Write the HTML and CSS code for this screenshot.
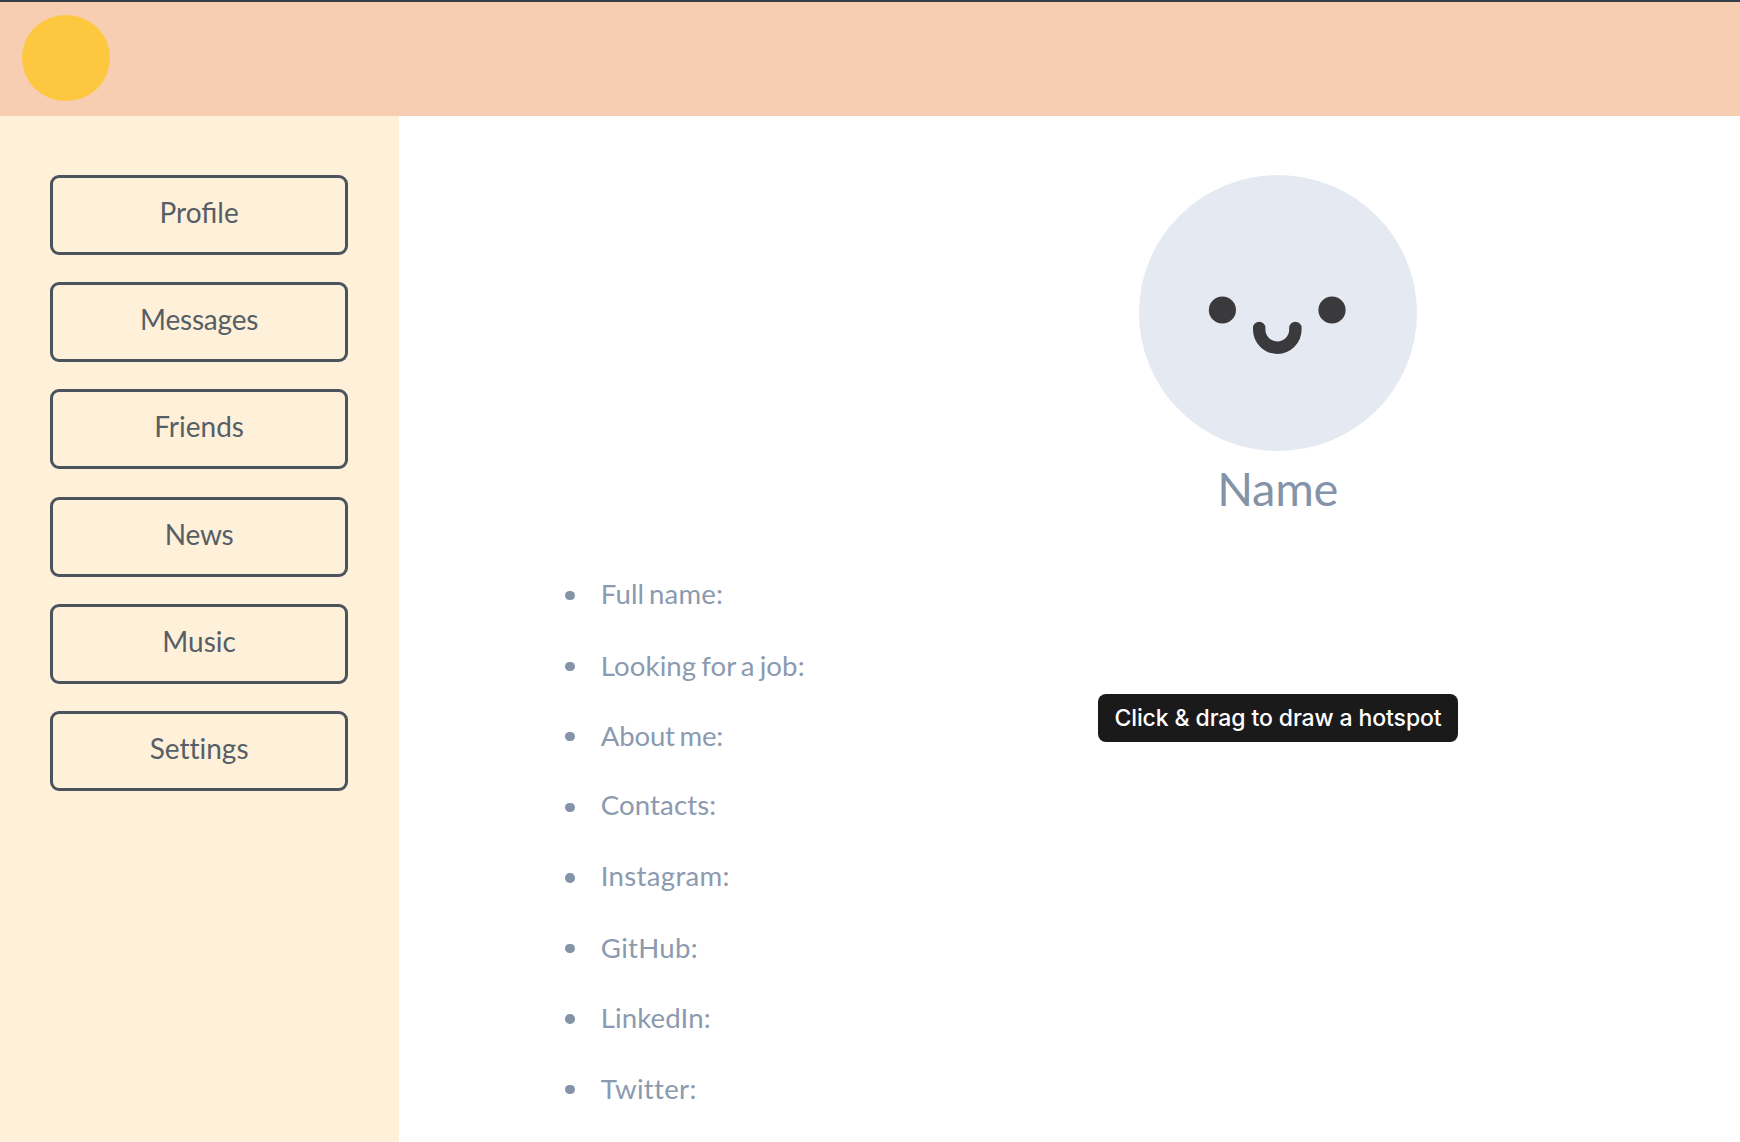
FILE: index.html
```html
<!DOCTYPE html>
<html lang="en">
<head>
<meta charset="utf-8">
<title>Profile</title>
<link rel="stylesheet" href="styles.css">
</head>
<body>
<header class="topbar"><div class="logo"></div></header>
<div class="layout">
  <nav class="sidebar">
    <a class="nav-button">Profile</a>
    <a class="nav-button snug">Messages</a>
    <a class="nav-button">Friends</a>
    <a class="nav-button snug">News</a>
    <a class="nav-button">Music</a>
    <a class="nav-button plain">Settings</a>
  </nav>
  <main class="content">
    <svg class="avatar" viewBox="0 0 278 276" width="278" height="276">
      <ellipse cx="139" cy="138" rx="139" ry="138" fill="#e4e9f2"/>
      <circle cx="83.4" cy="135" r="13.6" fill="#3a3a3c"/>
      <circle cx="193" cy="135" r="13.6" fill="#3a3a3c"/>
      <path d="M120.2 153V154.6a18.1 18.1 0 0 0 36.2 0V153" fill="none" stroke="#3a3a3c" stroke-width="12.4" stroke-linecap="round"/>
    </svg>
    <h1 class="name">Name</h1>
    <ul class="details">
      <li class="high"><span>Full name:</span></li>
      <li class="low"><span>Looking for a job:</span></li>
      <li><span class="snug">About me:</span></li>
      <li class="high"><span>Contacts:</span></li>
      <li class="high"><span class="wide">Instagram:</span></li>
      <li class="low"><span class="wide">GitHub:</span></li>
      <li><span>LinkedIn:</span></li>
      <li><span class="wide plain">Twitter:</span></li>
    </ul>
  </main>
</div>
<div class="tooltip">Click &amp; drag to draw a hotspot</div>
</body>
</html>
```
FILE: styles.css
```css
* { box-sizing: border-box; }
body {
  margin: 0;
  height: 1142px;
  overflow: hidden;
  background: #fff;
  font-family: Lato, "Liberation Sans", sans-serif;
}
.topbar {
  height: 116.4px;
  padding: 12.7px 22.4px;
  border-top: 2px solid #343d48;
  background: #f7ceb1;
}
.logo {
  width: 88px;
  height: 86.5px;
  border-radius: 50%;
  background: #fdc840;
}
.layout { display: flex; height: 1025.6px; }
.sidebar {
  display: flex;
  flex-direction: column;
  gap: 27.3px;
  width: 398.6px;
  padding: 58.4px 50.8px 0 50.4px;
  background: #fff0da;
}
.nav-button {
  flex: none;
  height: 80px;
  padding-top: 17px;
  border: 3px solid #4b545d;
  border-radius: 9px;
  color: #565f66;
  font-size: 28px;
  line-height: 34px;
  text-align: center;
}
.content {
  flex: 1;
  padding-top: 58.4px;
}
.avatar { display: block; margin-left: 740.8px; }
.name {
  margin: 8px 0 0 818.6px;
  color: #8493a8;
  font-size: 47px;
  font-weight: 400;
  line-height: 58px;
  letter-spacing: -0.3px;
}
.details {
  margin: 43.6px 0 0 166.8px;
  padding: 0;
  list-style: none;
}
.details li {
  display: flex;
  align-items: center;
  height: 70.57px;
  color: #8b9aaf;
  font-size: 27.6px;
  line-height: 34px;
  letter-spacing: 0.1px;
  word-spacing: -2.2px;
}
.details li::before {
  content: "";
  width: 9.4px;
  height: 9.4px;
  margin-right: 26px;
  border-radius: 50%;
  background: #8493a8;
}
.details span { margin-top: -2px; white-space: nowrap; }
.details .high span { margin-top: -4px; }
.details .low span { margin-top: -0.6px; }
.snug { letter-spacing: -0.2px; }
.wide { letter-spacing: 0.3px; }
.plain { font-variant-ligatures: none; }
.tooltip {
  position: absolute;
  left: 1098px;
  top: 694px;
  width: 360px;
  height: 48px;
  border-radius: 8px;
  background: #1a1a1a;
  color: #fff;
  font: 500 23px/48px Inter, sans-serif;
  letter-spacing: -0.1px;
  text-align: center;
  white-space: nowrap;
}
```
